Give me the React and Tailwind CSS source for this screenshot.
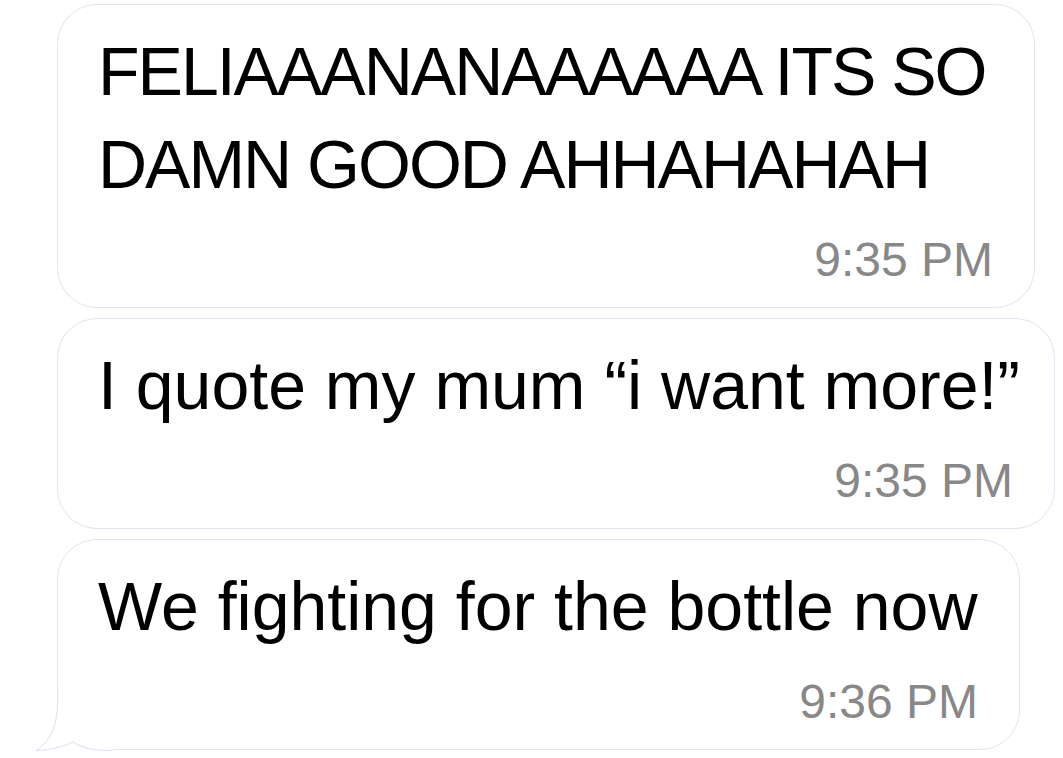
import React from 'react';

const messages = [
  {
    lines: ['FELIAAANANAAAAAA ITS SO', 'DAMN GOOD AHHAHAHAH'],
    time: '9:35 PM',
    width: 'w-[978px]',
    tight: true,
  },
  { lines: ['I quote my mum \u201Ci want more!\u201D'], time: '9:35 PM', width: 'w-[998px]' },
  { lines: ['We fighting for the bottle now'], time: '9:36 PM', width: 'w-[963px]', tail: true },
];

function Tail() {
  return (
    <svg
      className="absolute left-[-25px] bottom-[-2px]"
      width="80"
      height="62"
      viewBox="0 0 80 62"
      fill="none"
    >
      <path
        d="M24.5 0 L24.5 12 C24.5 38 17 52 3 61.5 C17 61 30 58 40 53 C48 58 58 61.5 74 61.5 L80 61.5 L80 0 Z"
        fill="#ffffff"
      />
      <path
        d="M24.5 0 L24.5 12 C24.5 38 17 52 3 61.5 C17 61 30 58 40 53 C48 58 58 61.5 74 61.5 L80 61.5"
        stroke="#d8e1ee"
        strokeWidth="1"
      />
    </svg>
  );
}

function Bubble({ lines, time, width, tail, tight }) {
  return (
    <div
      className={`relative ${width} shrink-0 rounded-[40px] border border-[#dfe6f0] bg-white pl-[40px] pr-[30px] pt-[20px] pb-[19px]`}
    >
      {lines.map((l, i) => (
        <p
          key={i}
          className={`whitespace-nowrap text-[68px] leading-[93px] text-black ${tight ? 'tracking-[-2px]' : ''}`}
        >
          {l}
        </p>
      ))}
      <p className="mt-[21px] mr-[11px] text-right text-[48px] leading-[56px] text-[#888888]">{time}</p>
      {tail && <Tail />}
    </div>
  );
}

export default function App() {
  return (
    <div
      className="w-[1063px] h-[758px] overflow-hidden bg-white pl-[57px] pt-[4px] flex flex-col items-start gap-[10px]"
      style={{ fontFamily: '"Liberation Sans", Arial, sans-serif' }}
    >
      {messages.map((m, i) => (
        <Bubble key={i} {...m} />
      ))}
    </div>
  );
}
